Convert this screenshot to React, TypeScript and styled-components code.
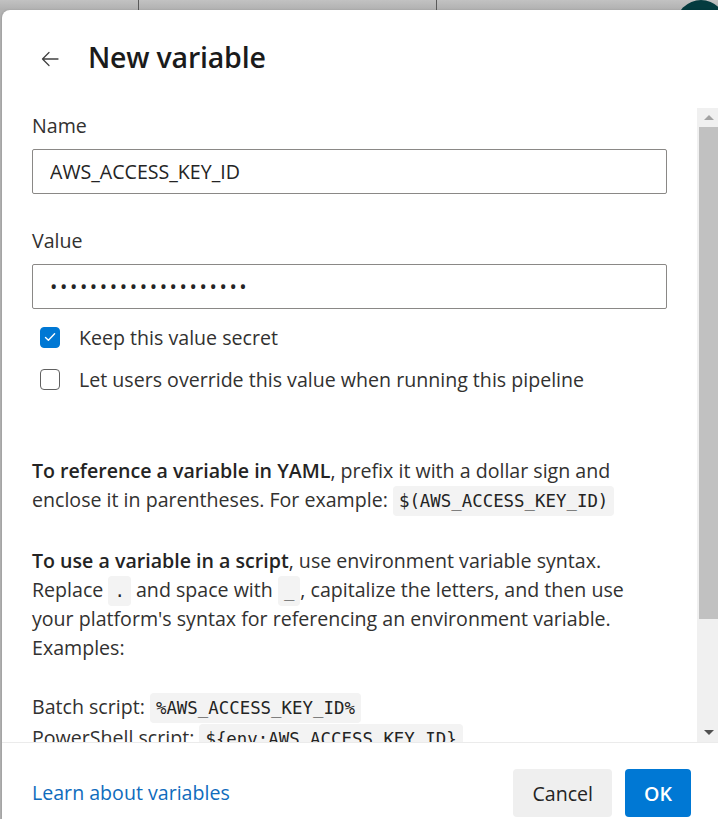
import React, { useState } from 'react';
import styled, { createGlobalStyle } from 'styled-components';

const GlobalStyle = createGlobalStyle`
  html, body {
    margin: 0;
    padding: 0;
    height: 100%;
    overflow: hidden;
    background: #b4b4b4;
  }
  #root {
    height: 100%;
  }
  * {
    box-sizing: border-box;
  }
`;

const FONT = `'Open Sans', 'Noto Sans', sans-serif`;

const Screen = styled.div`
  height: 100vh;
  display: flex;
  flex-direction: column;
  background: #b4b4b4;
  font-family: ${FONT};
`;

const PageStrip = styled.div`
  height: 10px;
  flex: none;
  display: flex;
  overflow: hidden;
  background: linear-gradient(#c2c2c2, #b0b0b0);
`;

const StripCell = styled.div<{ $w: number }>`
  width: ${(p) => p.$w}px;
  flex: none;
  border-right: 1px solid #5a5a5a;
`;

const Avatar = styled.div`
  margin-left: auto;
  margin-right: -8px;
  width: 50px;
  height: 50px;
  flex: none;
  border-radius: 50%;
  background: #043b3f;
`;

const Panel = styled.div`
  flex: 1;
  min-height: 0;
  margin-left: 2px;
  background: #fff;
  border-top-left-radius: 8px;
  display: flex;
  flex-direction: column;
  box-shadow: -1px 0 2px rgba(0, 0, 0, 0.12);
`;

const Header = styled.div`
  height: 98px;
  flex: none;
  display: flex;
  align-items: center;
  gap: 25px;
  padding: 0 0 0 35px;
`;

const BackButton = styled.button`
  width: 26px;
  height: 26px;
  border: none;
  background: none;
  padding: 0;
  display: flex;
  align-items: center;
  justify-content: center;
  cursor: pointer;
`;

const Title = styled.h1`
  margin: 0 0 4px;
  font-size: 28.5px;
  font-weight: 600;
  color: #1b1b1b;
  letter-spacing: -0.2px;
`;

const BodyRow = styled.div`
  flex: 1;
  min-height: 0;
  display: flex;
`;

const Body = styled.div`
  flex: 1;
  min-width: 0;
  overflow: hidden;
  padding: 0 30px 40px 30px;
  color: #323130;
  font-size: 19.6px;
`;

const ScrollBar = styled.div`
  width: 21px;
  flex: none;
  background: #f0f0f0;
  display: flex;
  flex-direction: column;
`;

const ScrollArrow = styled.div<{ $down?: boolean; $dim?: boolean }>`
  height: 19px;
  flex: none;
  display: flex;
  align-items: center;
  justify-content: center;
  padding-left: 2px;
  &::after {
    content: '';
    border-left: 5px solid transparent;
    border-right: 5px solid transparent;
    ${(p) => (p.$down ? 'border-top' : 'border-bottom')}: 5px solid ${(p) => (p.$dim ? '#a3a3a3' : '#505050')};
  }
`;

const ScrollTrack = styled.div`
  flex: 1;
  padding-left: 2px;
  display: flex;
  flex-direction: column;
`;

const ScrollThumb = styled.div`
  height: 492px;
  background: #c1c1c1;
`;

const Field = styled.div`
  display: flex;
  flex-direction: column;
  gap: 5px;
  margin-bottom: 29px;
`;

const Label = styled.label`
  line-height: 36px;
  color: #323130;
`;

const TextInput = styled.input`
  height: 45px;
  width: 100%;
  border: 1px solid #8a8886;
  border-radius: 2px;
  padding: 0 17px;
  font-family: ${FONT};
  font-size: 19.6px;
  color: #242424;
  outline: none;
  background: #fff;
  letter-spacing: ${(p) => (p.type === 'password' ? '2.6px' : '0')};
`;

const Checks = styled.div`
  display: flex;
  flex-direction: column;
  gap: 10px;
  margin-top: -17px;
  padding-left: 8px;
`;

const CheckRow = styled.label`
  display: flex;
  align-items: center;
  gap: 19px;
  height: 32px;
  cursor: pointer;
  color: #323130;
`;

const Box = styled.span<{ $on: boolean }>`
  width: 20px;
  height: 21px;
  flex: none;
  border-radius: 4px;
  border: 1px solid ${(p) => (p.$on ? '#0078d4' : '#616161')};
  background: ${(p) => (p.$on ? '#0078d4' : '#fff')};
  display: flex;
  align-items: center;
  justify-content: center;
`;

const Help = styled.div`
  margin-top: 61px;
  max-width: 628px;
  line-height: 29px;
`;

const Para = styled.p<{ $after?: number }>`
  margin: 0 0 ${(p) => p.$after ?? 32}px;
`;

const Strong = styled.b`
  font-weight: 600;
  color: #242424;
`;

const Code = styled.code`
  font-family: 'DejaVu Sans Mono', 'Liberation Mono', monospace;
  font-size: 17.4px;
  line-height: 1;
  background: #f3f3f3;
  border-radius: 4px;
  padding: 5px 6px;
  color: #242424;
`;

const ExampleLine = styled.div`
  line-height: 31px;
`;

const Footer = styled.div`
  flex: none;
  height: 77px;
  border-top: 1px solid #ebebeb;
  display: flex;
  align-items: flex-start;
  padding: 26px 27px 0 30px;
`;

const LearnLink = styled.a`
  color: #0f6cbd;
  font-size: 19.6px;
  line-height: 48px;
  text-decoration: none;
  margin-right: auto;
`;

const Actions = styled.div`
  display: flex;
  gap: 13px;
`;

const Btn = styled.button<{ $primary?: boolean }>`
  height: 48px;
  padding: 0 19px;
  border: none;
  border-radius: 4px;
  font-family: ${FONT};
  font-size: 19.6px;
  font-weight: ${(p) => (p.$primary ? 600 : 400)};
  background: ${(p) => (p.$primary ? '#0078d4' : '#efefef')};
  color: ${(p) => (p.$primary ? '#fff' : '#242424')};
  cursor: pointer;
`;

const ArrowLeft = () => (
  <svg width="20" height="20" viewBox="0 0 20 20" fill="none">
    <path d="M18 10H2.5M9 3.5L2.5 10l6.5 6.5" stroke="#424242" strokeWidth="1.3" strokeLinecap="round" strokeLinejoin="round" />
  </svg>
);

const Tick = () => (
  <svg width="14" height="14" viewBox="0 0 14 14" fill="none">
    <path d="M2.5 7.4l2.9 2.9 6.2-6.6" stroke="#fff" strokeWidth="1.4" strokeLinecap="round" strokeLinejoin="round" />
  </svg>
);

const App: React.FC = () => {
  const [name, setName] = useState('AWS_ACCESS_KEY_ID');
  const [value, setValue] = useState('abcdefghijklmnopqrst');
  const [secret, setSecret] = useState(true);
  const [override, setOverride] = useState(false);

  return (
    <Screen>
      <GlobalStyle />
      <PageStrip>
        <StripCell $w={139} />
        <StripCell $w={298} />
        <Avatar />
      </PageStrip>
      <Panel>
        <Header>
          <BackButton aria-label="Back">
            <ArrowLeft />
          </BackButton>
          <Title>New variable</Title>
        </Header>

        <BodyRow>
          <Body>
            <Field>
              <Label>Name</Label>
              <TextInput value={name} onChange={(e) => setName(e.target.value)} />
            </Field>
            <Field>
              <Label>Value</Label>
              <TextInput type="password" value={value} onChange={(e) => setValue(e.target.value)} />
            </Field>

            <Checks>
              <CheckRow onClick={() => setSecret(!secret)}>
                <Box $on={secret}>{secret && <Tick />}</Box>
                Keep this value secret
              </CheckRow>
              <CheckRow onClick={() => setOverride(!override)}>
                <Box $on={override}>{override && <Tick />}</Box>
                Let users override this value when running this pipeline
              </CheckRow>
            </Checks>

            <Help>
              <Para>
                <Strong>To reference a variable in YAML</Strong>, prefix it with a dollar sign and
                enclose it in parentheses. For example: <Code>$(AWS_ACCESS_KEY_ID)</Code>
              </Para>
              <Para $after={29}>
                <Strong>To use a variable in a script</Strong>, use environment variable syntax.
                Replace <Code>.</Code> and space with <Code>_</Code>, capitalize the letters, and then
                use your platform's syntax for referencing an environment variable. Examples:
              </Para>
              <ExampleLine>
                Batch script: <Code>%AWS_ACCESS_KEY_ID%</Code>
              </ExampleLine>
              <ExampleLine>
                PowerShell script: <Code>{'${env:AWS_ACCESS_KEY_ID}'}</Code>
              </ExampleLine>
              <ExampleLine>
                Bash script: <Code>$AWS_ACCESS_KEY_ID</Code>
              </ExampleLine>
            </Help>
          </Body>
          <ScrollBar>
            <ScrollArrow $dim />
            <ScrollTrack>
              <ScrollThumb />
            </ScrollTrack>
            <ScrollArrow $down />
          </ScrollBar>
        </BodyRow>

        <Footer>
          <LearnLink href="#">Learn about variables</LearnLink>
          <Actions>
            <Btn>Cancel</Btn>
            <Btn $primary>OK</Btn>
          </Actions>
        </Footer>
      </Panel>
    </Screen>
  );
};

export default App;
